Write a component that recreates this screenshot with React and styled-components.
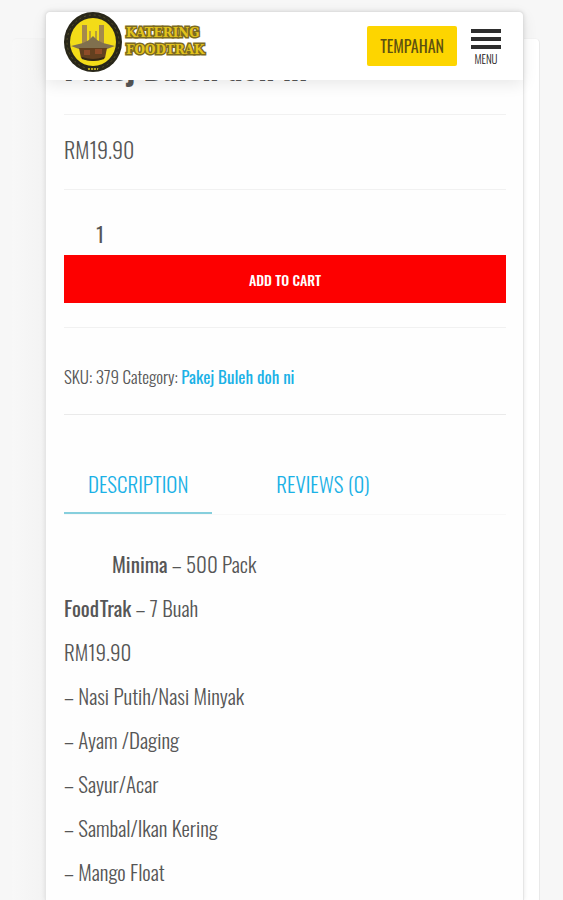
import React from 'react';
import styled, { createGlobalStyle } from 'styled-components';

const lines = [
    '– Nasi Putih/Nasi Minyak',
    '– Ayam /Daging',
    '– Sayur/Acar',
    '– Sambal/Ikan Kering',
    '– Mango Float',
];

export default () => (
    <>
        <GlobalStyle />
        <Backdrop>
            <Phone>
                <Header>
                    <Brand href="#home">
                        <Emblem />
                        <BrandName><span>KATERING</span><span>FOODTRAK</span></BrandName>
                    </Brand>
                    <BookLink href="#tempahan">TEMPAHAN</BookLink>
                    <MenuButton type="button">
                        <Bar /><Bar /><Bar />
                        MENU
                    </MenuButton>
                </Header>
                <Product>
                    <Title>Pakej Buleh doh ni</Title>
                    <Price>RM19.90</Price>
                    <CartForm onSubmit={e => e.preventDefault()}>
                        <Quantity type="text" inputMode="numeric" aria-label="Quantity" defaultValue="1" />
                        <CartButton type="submit">ADD TO CART</CartButton>
                    </CartForm>
                    <Meta>
                        SKU: 379 Category: <a href="#pakej">Pakej Buleh doh ni</a>
                    </Meta>
                    <Tabs role="tablist">
                        <Tab type="button" role="tab" aria-selected="true" $active>DESCRIPTION</Tab>
                        <Tab type="button" role="tab" aria-selected="false">REVIEWS (0)</Tab>
                    </Tabs>
                    <Description>
                        <Line $indent><b>Minima</b> – 500 Pack</Line>
                        <Line><b>FoodTrak</b> – 7 Buah</Line>
                        <Line>RM19.90</Line>
                        {lines.map(line => <Line key={line}>{line}</Line>)}
                    </Description>
                </Product>
            </Phone>
        </Backdrop>
    </>
);

const Emblem = () => (
    <svg width="58" height="60" viewBox="0 0 58 60" aria-hidden="true">
        <ellipse cx="29" cy="30" rx="29" ry="30" fill="#292719" />
        <ellipse cx="29" cy="30" rx="26" ry="27" fill="none" stroke="#57502a" strokeWidth="1" strokeDasharray="2 3" />
        <ellipse cx="29" cy="30" rx="23" ry="24" fill="#f3dc18" />
        <path d="M18 13h5v22h-5zM35 13h5v22h-5z" fill="#a58a4c" />
        <path d="M25 19h2v14h-2zM31 19h2v14h-2z" fill="#b79d3a" />
        <path d="M7 34l12-3 6-3 4-4 4 4 6 3 12 3-8 3H15z" fill="#80704e" />
        <path d="M15 36h28l-2 10q-12 6-24 0z" fill="#63401f" />
        <path d="M20 38h6v5h-6zM31 37h7v5h-7z" fill="#8e4b28" />
        <path d="M18 46q11 4 22 0" fill="none" stroke="#332715" strokeWidth="2" />
        <path d="M24 57h10" stroke="#b7a51e" strokeWidth="2" strokeDasharray="2 1" />
    </svg>
);

const GlobalStyle = createGlobalStyle`
    *{box-sizing: border-box;}
    body{
        margin: 0;
        background-color: #f7f7f7;
        color: #565656;
        font-family: 'Oswald', 'Liberation Sans Narrow', 'Liberation Sans', sans-serif;
        font-size: 21px;
        font-weight: 300;
        line-height: 24px;
    }
    a{color: #1bb1e6; text-decoration: none;}
    b{font-weight: 400;}
    button, input{font-family: inherit; font-weight: inherit;}
`;
const Backdrop = styled.div`
    display: flow-root;
    margin: 38px 23px 0 12px;
    padding: 0 15px 0 33px;
    background: linear-gradient(90deg, #f8f8f8 0, #f3f3f3 32px, #fff 60px);
    border-top: 1px solid #f3f3f3;
    border-right: 1px solid #e9e9e9;
    border-radius: 5px 5px 0 0;
`;
const Phone = styled.main`
    margin-top: -28px;
    min-height: calc(100vh - 11px);
    background-color: #fefefe;
    border: 1px solid #e6e6e6;
    border-bottom: 0;
    border-radius: 5px 5px 0 0;
    box-shadow: 0 0 4px rgba(0, 0, 0, 0.1);
`;
const Header = styled.header`
    height: 68px;
    padding: 0 22px 0 18px;
    display: flex;
    align-items: flex-start;
    position: sticky;
    top: 0;
    z-index: 1;
    background-color: #fff;
    border-radius: 5px 5px 0 0;
    box-shadow: 0 4px 16px rgba(0, 0, 0, 0.09);
`;
const Brand = styled.a`
    display: flex;
    margin-right: auto;
`;
const BrandName = styled.span`
    padding: 14px 0 0 4px;
    display: flex;
    flex-direction: column;
    gap: 2px;
    color: #e2c31c;
    font: 700 12px/15px 'DejaVu Serif', serif;
    -webkit-text-stroke: 3px #7c6a20;
    paint-order: stroke fill;
`;
const BookLink = styled.a`
    height: 40px;
    margin: 14px 14px 0 0;
    padding: 0 13px;
    background-color: #fdd500;
    border-radius: 2px;
    color: #5e5110;
    font-size: 16px;
    font-weight: 400;
    line-height: 40px;
`;
const MenuButton = styled.button`
    width: 30px;
    margin-top: 17px;
    padding: 0;
    display: flex;
    flex-direction: column;
    align-items: center;
    gap: 4px;
    border: 0;
    background: none;
    color: #222;
    font-size: 11px;
    line-height: 12px;
`;
const Bar = styled.span`
    width: 100%; height: 4px;
    background-color: #2e2e2e;
`;
const Product = styled.article`
    padding: 0 17px 0 18px;
`;
const Title = styled.h1`
    height: 32px;
    margin: 0;
    margin-top: -25px;
    font-size: 32px;
    font-weight: 700;
    line-height: 24px;
    color: #555;
`;
const Price = styled.p`
    margin: 0;
    margin-top: 27px;
    padding: 22px 0 28px;
    border-top: 1px solid #f1f1f1;
    border-bottom: 1px solid #f1f1f1;
    font-size: 22px;
`;
const CartForm = styled.form`
    padding: 28px 0 24px;
    border-bottom: 1px solid #f1f1f1;
`;
const Quantity = styled.input`
    display: block;
    width: 72px; height: 32px;
    margin-bottom: 5px;
    padding: 0;
    border: 0;
    background: none;
    color: inherit;
    font-size: 20px;
    font-weight: 400;
    text-align: center;
`;
const CartButton = styled.button`
    display: block;
    width: 100%; height: 48px;
    border: 0;
    background-color: #fd0000;
    color: #fff;
    font-size: 14px;
    font-weight: 500;
`;
const Meta = styled.p`
    margin: 0;
    padding: 37px 0 25px;
    border-bottom: 1px solid #eaeaea;
    font-size: 17px;
    a{font-weight: 400;}
`;
const Tabs = styled.div`
    margin-top: 39px;
    display: flex;
    gap: 40px;
    border-bottom: 1px solid #f8f8f8;
`;
const Tab = styled.button`
    height: 60px;
    padding: 0 24px;
    border: 0;
    border-bottom: 2px solid ${props => props.$active ? '#86cfdd' : 'transparent'};
    background: none;
    color: #1bb1e6;
    font-size: 21px;
`;
const Description = styled.div`
    padding: 37px 0 16px;
    display: flex;
    flex-direction: column;
    gap: 20px;
`;
const Line = styled.p`
    margin: 0;
    padding-left: ${props => props.$indent ? '48px' : '0'};
`;
